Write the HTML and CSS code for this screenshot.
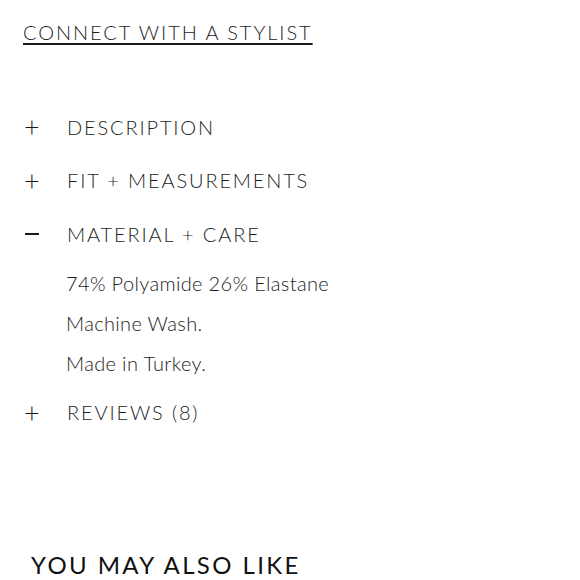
FILE: index.html
```html
<!DOCTYPE html>
<html>
<head>
<meta charset="utf-8">
<link rel="stylesheet" href="styles.css">
</head>
<body>
<div class="page">
  <a class="stylist" href="#">CONNECT WITH A STYLIST</a>
  <div class="accordion">
    <div class="item">
      <div class="head"><span class="icon">+</span><span class="title">DESCRIPTION</span></div>
    </div>
    <div class="item">
      <div class="head"><span class="icon">+</span><span class="title">FIT + MEASUREMENTS</span></div>
    </div>
    <div class="item open">
      <div class="head"><span class="icon minus"></span><span class="title">MATERIAL + CARE</span></div>
      <div class="body">
        <p>74% Polyamide 26% Elastane</p>
        <p>Machine Wash.</p>
        <p>Made in Turkey.</p>
      </div>
    </div>
    <div class="item">
      <div class="head"><span class="icon">+</span><span class="title">REVIEWS (8)</span></div>
    </div>
  </div>
  <h2 class="also">YOU MAY ALSO LIKE</h2>
</div>
</body>
</html>
```
FILE: styles.css
```css
html, body { margin: 0; padding: 0; background: #fff; }
body { font-family: Lato, "Liberation Sans", sans-serif; color: #1c1c1c; font-weight: 300; }
.page { padding: 18px 0 0 23px; }
.stylist {
  display: inline-block;
  font-size: 20px;
  letter-spacing: 1.95px;
  color: #1c1c1c;
  text-decoration: underline;
  text-decoration-thickness: 1.5px;
  text-underline-offset: 3px;
  line-height: 28px;
}
.accordion { margin-top: 54px; display: flex; flex-direction: column; }
.head { display: flex; align-items: center; height: 53.5px; }
.icon { width: 43px; font-size: 27px; font-weight: 300; line-height: 1; padding-left: 1px; color: #1c1c1c; }
.icon.minus { display: flex; align-items: center; height: 24px; }
.icon.minus::before { content: ""; display: block; width: 14px; height: 1.5px; background: #1c1c1c; margin-left: 1px; }
.title { font-size: 20px; letter-spacing: 1.85px; }
.body { padding: 0 0 0 43px; margin-top: 2px; margin-bottom: 3px; }
.body p { margin: 0; font-size: 20px; line-height: 40px; letter-spacing: 0.35px; }
.also {
  margin: 111px 0 0 8px;
  font-size: 24px;
  font-weight: 400;
  letter-spacing: 2.4px;
  color: #111;
}
```
